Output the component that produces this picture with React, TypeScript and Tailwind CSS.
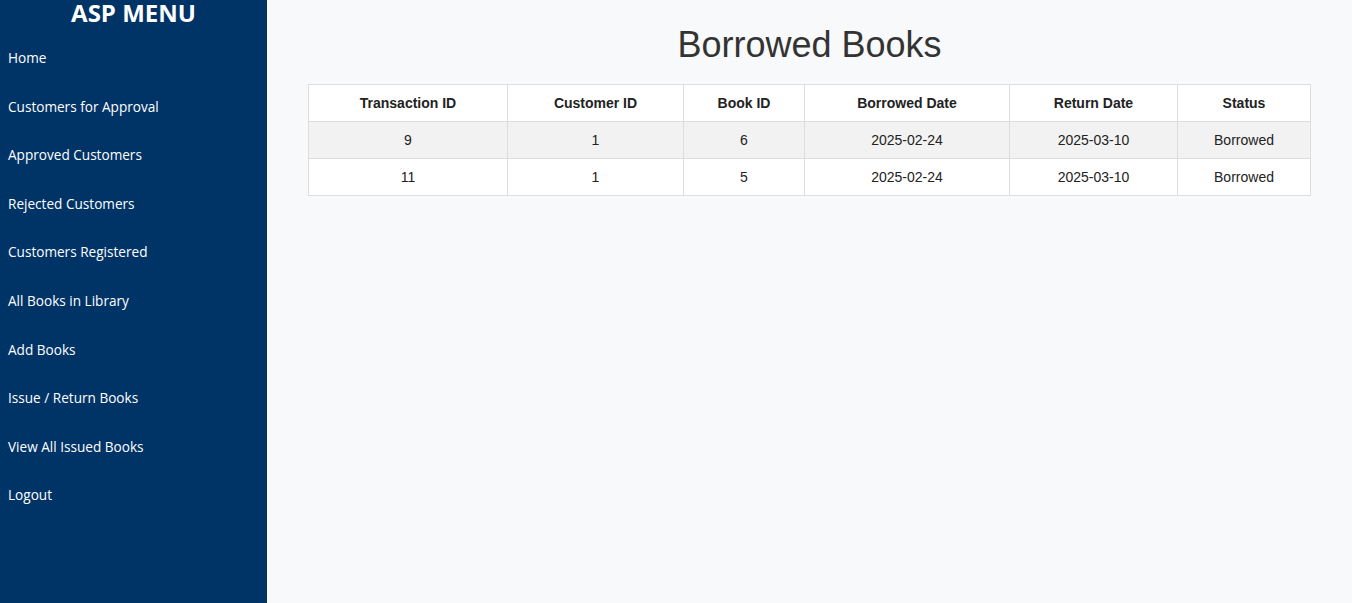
import React from "react";

const menuItems = [
    "Home",
    "Customers for Approval",
    "Approved Customers",
    "Rejected Customers",
    "Customers Registered",
    "All Books in Library",
    "Add Books",
    "Issue / Return Books",
    "View All Issued Books",
    "Logout",
];

const rows = [
    { id: "9", customer: "1", book: "6", borrowed: "2025-02-24", returned: "2025-03-10", status: "Borrowed" },
    { id: "11", customer: "1", book: "5", borrowed: "2025-02-24", returned: "2025-03-10", status: "Borrowed" },
];

const App: React.FC = () => {
    return (
        <div className="flex min-h-[603px] w-full bg-[#f8f9fa]">
            {/* SIDEBAR */}
            <aside className="w-[267px] shrink-0 bg-[#003366] text-white font-['Open_Sans',sans-serif]">
                <h2 className="h-[34px] pt-[1px] text-center text-[24px] font-bold leading-[24px]">ASP MENU</h2>
                <ul>
                    {menuItems.map((item) => (
                        <li key={item}>
                            <a href="#" className="block h-[48.6px] px-[8px] text-[13.6px] leading-[48.6px] text-white">
                                {item}
                            </a>
                        </li>
                    ))}
                </ul>
            </aside>

            {/* MAIN */}
            <main className="flex-1 px-[41px] font-['Liberation_Sans',Arial,sans-serif]">
                <h1 className="mt-[24px] mb-[18px] text-center text-[36px] leading-[42px] text-[#333]">Borrowed Books</h1>
                <table className="w-full border-collapse bg-white text-[14px] leading-[16px] text-[#222]">
                    <thead>
                        <tr>
                            <th className="w-[199px] border border-[#ddd] p-[10px] font-bold">Transaction ID</th>
                            <th className="w-[176px] border border-[#ddd] p-[10px] font-bold">Customer ID</th>
                            <th className="w-[121px] border border-[#ddd] p-[10px] font-bold">Book ID</th>
                            <th className="w-[205px] border border-[#ddd] p-[10px] font-bold">Borrowed Date</th>
                            <th className="w-[168px] border border-[#ddd] p-[10px] font-bold">Return Date</th>
                            <th className="border border-[#ddd] p-[10px] font-bold">Status</th>
                        </tr>
                    </thead>
                    <tbody>
                        {rows.map((r, i) => (
                            <tr key={r.id} className={i % 2 === 0 ? "bg-[#f2f2f2]" : "bg-white"}>
                                <td className="border border-[#ddd] p-[10px] text-center">{r.id}</td>
                                <td className="border border-[#ddd] p-[10px] text-center">{r.customer}</td>
                                <td className="border border-[#ddd] p-[10px] text-center">{r.book}</td>
                                <td className="border border-[#ddd] p-[10px] text-center">{r.borrowed}</td>
                                <td className="border border-[#ddd] p-[10px] text-center">{r.returned}</td>
                                <td className="border border-[#ddd] p-[10px] text-center">{r.status}</td>
                            </tr>
                        ))}
                    </tbody>
                </table>
            </main>
        </div>
    );
};

export default App;
